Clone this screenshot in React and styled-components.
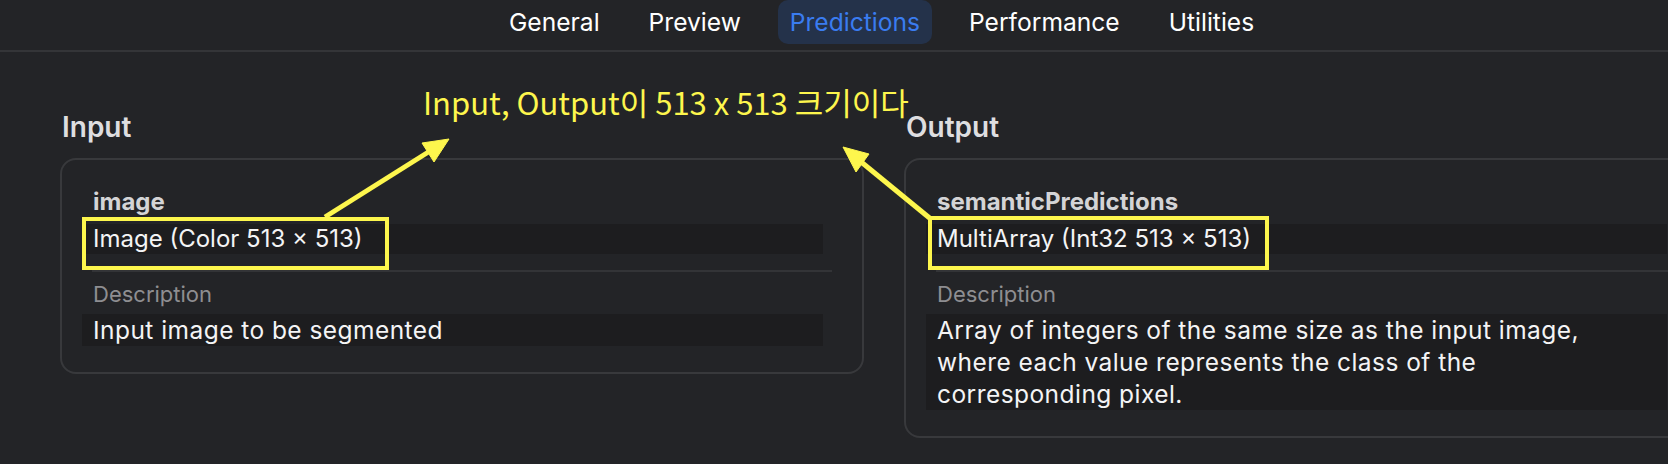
import React from "react";
import styled, { createGlobalStyle } from "styled-components";

const Global = createGlobalStyle`
  html, body {
    margin: 0;
    padding: 0;
    background: #232427;
    overflow: hidden;
  }
  body {
    width: 1668px;
    height: 464px;
    font-family: "Inter", "Liberation Sans", sans-serif;
  }
`;

const Page = styled.div`
  position: relative;
  width: 1668px;
  height: 464px;
  background: #232427;
  overflow: hidden;
`;

const TabBar = styled.nav`
  display: flex;
  align-items: flex-start;
  gap: 25px;
  height: 50px;
  padding-left: 497px;
  border-bottom: 2px solid #343538;
  box-sizing: content-box;
`;

const Tab = styled.div`
  height: 44px;
  line-height: 45px;
  padding: 0 12px;
  border-radius: 10px;
  font-size: 24.6px;
  font-weight: 400;
  color: ${(p) => (p.$active ? "#3a7cf0" : "#ffffff")};
  background: ${(p) => (p.$active ? "#24324a" : "transparent")};
  white-space: nowrap;
`;

const Content = styled.main`
  display: grid;
  grid-template-columns: 804px 804px;
  column-gap: 40px;
  align-items: start;
  padding: 58px 0 0 60px;
`;

const Column = styled.section`
  display: flex;
  flex-direction: column;
`;

const Heading = styled.h2`
  margin: 0 0 14px 2px;
  font-size: 28px;
  line-height: 34px;
  font-weight: 600;
  color: #dedee0;
`;

const Card = styled.div`
  display: flex;
  flex-direction: column;
  border: 2px solid #38393c;
  border-radius: 16px;
  padding: 27px 39px 26px 20px;
`;

const FieldName = styled.div`
  padding-left: 11px;
  font-size: 24px;
  line-height: 30px;
  font-weight: 700;
  color: #d4d4d6;
`;

const ValueRow = styled.div`
  position: relative;
  margin-top: 7px;
  padding-left: 11px;
  height: 30px;
  line-height: 30px;
  font-size: 24px;
  color: #f4f4f5;
  background: #1d1d1f;
  white-space: nowrap;
`;

const Highlight = styled.span`
  position: absolute;
  left: ${(p) => p.$left}px;
  top: ${(p) => p.$top}px;
  width: ${(p) => p.$width}px;
  height: ${(p) => p.$height}px;
  box-sizing: border-box;
  border: 4px solid #fdf64d;
  pointer-events: none;
`;

const Divider = styled.div`
  height: 2px;
  margin: 16px -9px 0 10px;
  background: #333437;
`;

const DescLabel = styled.div`
  margin-top: 8px;
  padding-left: 11px;
  font-size: 22px;
  line-height: 28px;
  color: #8e8e91;
`;

const DescValue = styled.div`
  margin-top: 6px;
  padding-left: 11px;
  font-size: 24.5px;
  letter-spacing: 0.45px;
  line-height: 32px;
  color: #f4f4f5;
  background: #1d1d1f;
  white-space: nowrap;
`;

const Annotation = styled.div`
  position: absolute;
  left: 423px;
  top: 86px;
  font-family: "Noto Sans CJK KR", "Noto Sans", sans-serif;
  font-size: 31px;
  letter-spacing: 0;
  line-height: 31px;
  color: #fdf64d;
  white-space: nowrap;
`;

const Arrows = styled.svg`
  position: absolute;
  left: 0;
  top: 0;
  pointer-events: none;
`;

const tabs = ["General", "Preview", "Predictions", "Performance", "Utilities"];

export default function App() {
  return (
    <Page>
      <Global />
      <TabBar>
        {tabs.map((t) => (
          <Tab key={t} $active={t === "Predictions"}>
            {t}
          </Tab>
        ))}
      </TabBar>
      <Content>
        <Column>
          <Heading>Input</Heading>
          <Card>
            <FieldName>image</FieldName>
            <ValueRow>
              Image (Color 513 × 513)
              <Highlight $left={0} $top={-7} $width={307} $height={53} />
            </ValueRow>
            <Divider />
            <DescLabel>Description</DescLabel>
            <DescValue>Input image to be segmented</DescValue>
          </Card>
        </Column>
        <Column>
          <Heading>Output</Heading>
          <Card>
            <FieldName>semanticPredictions</FieldName>
            <ValueRow>
              MultiArray (Int32 513 × 513)
              <Highlight $left={2} $top={-8} $width={341} $height={54} />
            </ValueRow>
            <Divider />
            <DescLabel>Description</DescLabel>
            <DescValue>
              Array of integers of the same size as the input image,
              <br />
              where each value represents the class of the
              <br />
              corresponding pixel.
            </DescValue>
          </Card>
        </Column>
      </Content>
      <Annotation>Input, Output이 513 x 513 크기이다</Annotation>
      <Arrows width="1668" height="464" viewBox="0 0 1668 464">
        <g fill="#fdf64d" stroke="#fdf64d" strokeLinecap="butt">
          <line x1="325" y1="217" x2="430" y2="151" strokeWidth="5" />
          <polygon points="449,139 422,143 434,162" strokeWidth="1" />
          <line x1="932" y1="220" x2="860" y2="161" strokeWidth="5" />
          <polygon points="843,147 869,154 856,172" strokeWidth="1" />
        </g>
      </Arrows>
    </Page>
  );
}
